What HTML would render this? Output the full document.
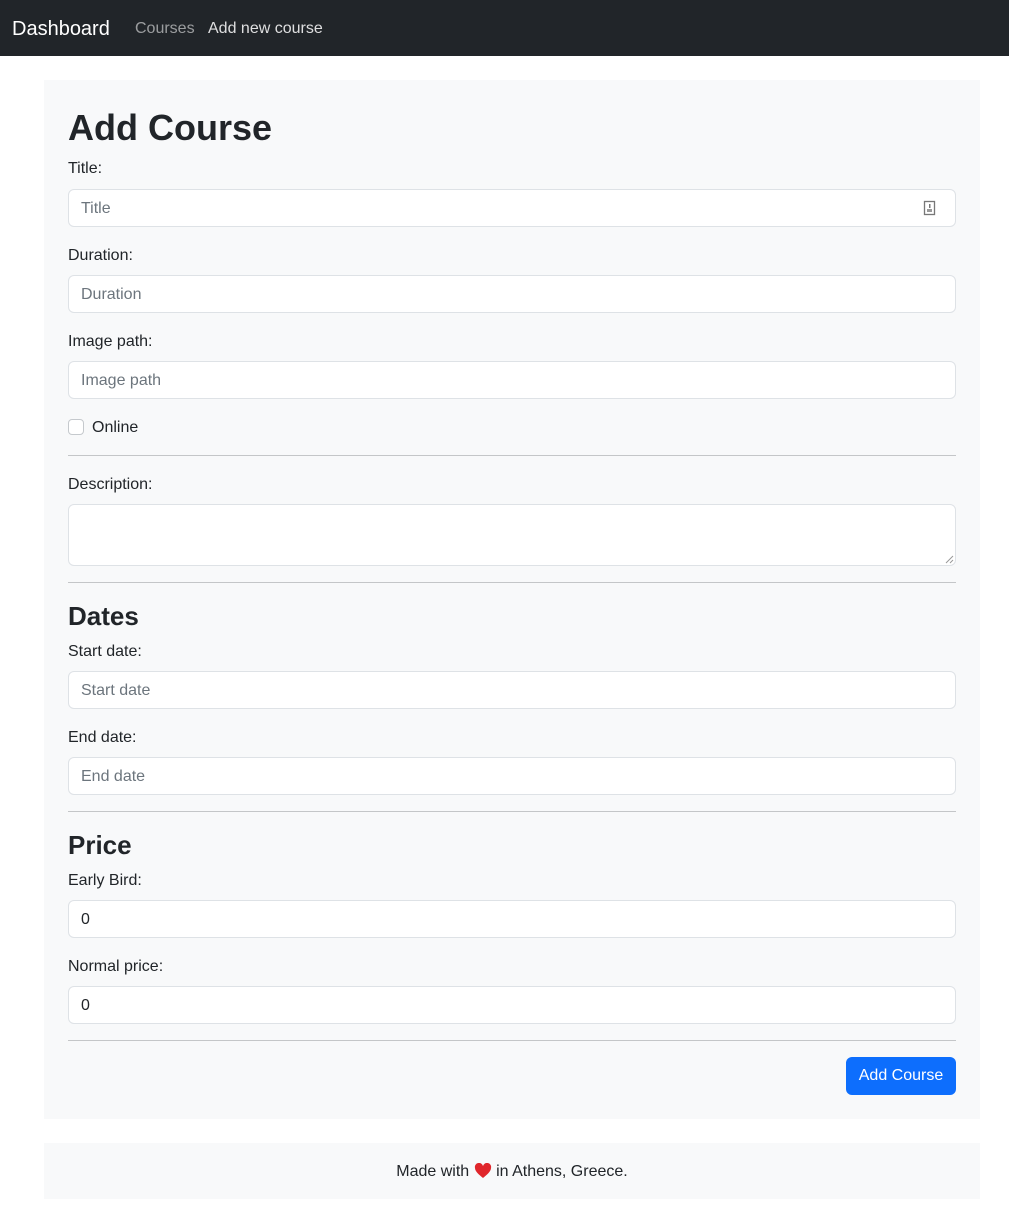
<!DOCTYPE html>
<html><head><meta charset="utf-8"><style>
*{box-sizing:border-box;margin:0;padding:0}
body{width:1009px;height:1215px;background:#fff;font-family:"Liberation Sans",sans-serif;color:#212529;position:relative;overflow:hidden}
.a{position:absolute}
.nav{left:0;top:0;width:1009px;height:56px;background:#212529}
.lbl{font-size:16px;line-height:20px;left:68px}
.inp{left:68px;width:888px;height:38px;border:1px solid #dee2e6;border-radius:6px;background:#fff;font-size:16px;line-height:38px;padding-left:12px;color:#6c757d}
.val{color:#212529}
.hr{left:68px;width:888px;height:1px;background:#c4c6c8}
.h{left:68px;font-weight:bold}
</style></head><body>
<div class="a nav"></div>
<div class="a" style="left:12px;top:16px;font-size:20px;line-height:26px;color:#fff">Dashboard</div>
<div class="a" style="left:135px;top:19px;font-size:16px;line-height:20px;color:rgba(255,255,255,.55)">Courses</div>
<div class="a" style="left:208px;top:19px;font-size:16px;line-height:20px;color:rgba(255,255,255,.85)">Add new course</div>

<div class="a" style="left:44px;top:80px;width:936px;height:1039px;background:#f8f9fa"></div>
<div class="a h" style="top:104px;font-size:36px;line-height:48px">Add Course</div>

<div class="a lbl" style="top:159px">Title:</div>
<div class="a inp" style="top:189px">Title</div>
<svg class="a" style="left:923px;top:200px" width="14" height="16" viewBox="0 0 14 16"><rect x="1.5" y="1.5" width="10" height="13" fill="none" stroke="#777" stroke-width="1.3"/><rect x="4" y="9" width="5" height="3" fill="#999"/><rect x="6" y="4" width="1.5" height="4" fill="#777"/></svg>

<div class="a lbl" style="top:246px">Duration:</div>
<div class="a inp" style="top:275px">Duration</div>

<div class="a lbl" style="top:332px">Image path:</div>
<div class="a inp" style="top:361px">Image path</div>

<div class="a" style="left:68px;top:419px;width:16px;height:16px;border:1px solid #c5c9cd;border-radius:4px;background:#fff"></div>
<div class="a lbl" style="left:92px;top:418px">Online</div>
<div class="a hr" style="top:455px"></div>

<div class="a lbl" style="top:475px">Description:</div>
<div class="a inp" style="top:504px;height:62px"></div>
<svg class="a" style="left:944px;top:554px" width="10" height="10"><path d="M2 9L9 2M6 9L9 6" stroke="#999" stroke-width="1"/></svg>
<div class="a hr" style="top:582px"></div>

<div class="a h" style="top:600px;font-size:26px;line-height:32px">Dates</div>
<div class="a lbl" style="top:642px">Start date:</div>
<div class="a inp" style="top:671px">Start date</div>
<div class="a lbl" style="top:728px">End date:</div>
<div class="a inp" style="top:757px">End date</div>
<div class="a hr" style="top:811px"></div>

<div class="a h" style="top:829px;font-size:26px;line-height:32px">Price</div>
<div class="a lbl" style="top:871px">Early Bird:</div>
<div class="a inp val" style="top:900px">0</div>
<div class="a lbl" style="top:957px">Normal price:</div>
<div class="a inp val" style="top:986px">0</div>
<div class="a hr" style="top:1040px"></div>

<div class="a" style="left:846px;top:1057px;width:110px;height:38px;background:#0d6efd;border-radius:6px;color:#fff;font-size:16px;line-height:38px;text-align:center">Add Course</div>

<div class="a" style="left:44px;top:1143px;width:936px;height:56px;background:#f8f9fa;font-size:16px;line-height:57px;text-align:center">Made with <svg width="18" height="16" viewBox="0 0 18 16" style="vertical-align:-3px"><path d="M9 15C4 11 1 8 1 5A4 4 0 0 1 9 3A4 4 0 0 1 17 5C17 8 14 11 9 15Z" fill="#e0262b"/></svg> in Athens, Greece.</div>
</body></html>
